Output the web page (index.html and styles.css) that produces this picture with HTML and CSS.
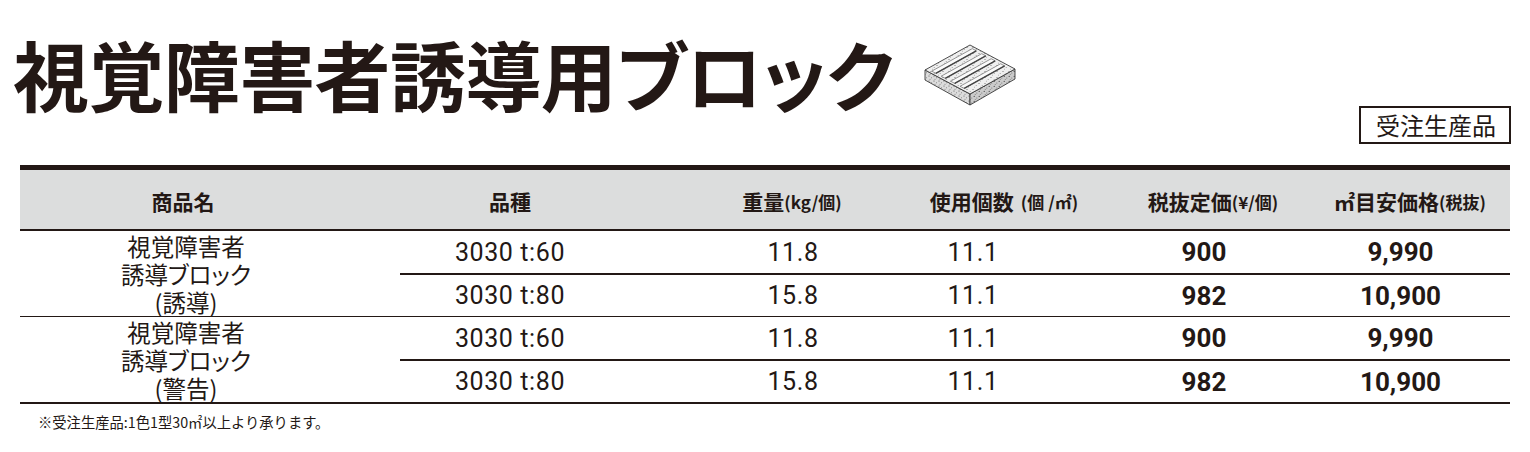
FILE: index.html
```html
<!DOCTYPE html>
<html lang="ja">
<head>
<meta charset="utf-8">
<title>視覚障害者誘導用ブロック</title>
<link rel="stylesheet" href="styles.css">
</head>
<body>
<div class="page">
  <div class="head">
    <div class="title-row">
      <h1 class="title">視覚障害者誘導用ブロック</h1>
      <svg class="tile-icon" width="100" height="68" viewBox="0 0 100 68" aria-hidden="true">
        <defs>
          <pattern id="dotsT" width="6" height="6" patternUnits="userSpaceOnUse">
            <rect width="6" height="6" fill="#efefef"/>
            <circle cx="1" cy="1.5" r=".55" fill="#6a6a6a"/>
            <circle cx="4.2" cy="3.4" r=".5" fill="#8a8a8a"/>
            <circle cx="2.4" cy="5.1" r=".45" fill="#5a5a5a"/>
          </pattern>
          <pattern id="dotsL" width="5" height="5" patternUnits="userSpaceOnUse">
            <rect width="5" height="5" fill="#dcdcdc"/>
            <circle cx="1" cy="1" r=".55" fill="#555"/>
            <circle cx="3.5" cy="2.8" r=".5" fill="#777"/>
            <circle cx="2" cy="4.3" r=".45" fill="#444"/>
          </pattern>
          <pattern id="dotsR" width="5" height="5" patternUnits="userSpaceOnUse">
            <rect width="5" height="5" fill="#cbcbcb"/>
            <circle cx="1.2" cy="1.4" r=".55" fill="#444"/>
            <circle cx="3.8" cy="3" r=".5" fill="#666"/>
            <circle cx="2.2" cy="4.4" r=".45" fill="#333"/>
          </pattern>
        </defs>
        <polygon points="7,30 52,54 52,65 7,40" fill="url(#dotsL)" stroke="#3a3a3a" stroke-width=".9"/>
        <polygon points="52,54 97,29 97,39 52,65" fill="url(#dotsR)" stroke="#3a3a3a" stroke-width=".9"/>
        <polygon points="7,30 52,5 97,29 52,54" fill="url(#dotsT)" stroke="#3a3a3a" stroke-width=".9"/>
        <g transform="matrix(.45,-.25,.45,.24,7,30)">
          <rect x="5" y="10" width="90" height="9" fill="#fafafa" stroke="#6a6a6a" stroke-width=".7" vector-effect="non-scaling-stroke"/>
          <line x1="5" y1="19" x2="95" y2="19" stroke="#444" stroke-width="1.4" vector-effect="non-scaling-stroke"/>
          <rect x="5" y="31" width="90" height="9" fill="#fafafa" stroke="#6a6a6a" stroke-width=".7" vector-effect="non-scaling-stroke"/>
          <line x1="5" y1="40" x2="95" y2="40" stroke="#444" stroke-width="1.4" vector-effect="non-scaling-stroke"/>
          <rect x="5" y="52" width="90" height="9" fill="#fafafa" stroke="#6a6a6a" stroke-width=".7" vector-effect="non-scaling-stroke"/>
          <line x1="5" y1="61" x2="95" y2="61" stroke="#444" stroke-width="1.4" vector-effect="non-scaling-stroke"/>
          <rect x="5" y="73" width="90" height="9" fill="#fafafa" stroke="#6a6a6a" stroke-width=".7" vector-effect="non-scaling-stroke"/>
          <line x1="5" y1="82" x2="95" y2="82" stroke="#444" stroke-width="1.4" vector-effect="non-scaling-stroke"/>
        </g>
      </svg>
    </div>
    <div class="order-badge">受注生産品</div>
  </div>

  <div class="spec-table">
    <div class="thead">
      <div class="th c1">商品名</div>
      <div class="th c2">品種</div>
      <div class="th c3">重量<span class="unit">(kg/個)</span></div>
      <div class="th c4">使用個数<span class="unit gap">(個 /㎡)</span></div>
      <div class="th c5">税抜定価<span class="unit">(¥/個)</span></div>
      <div class="th c6">㎡目安価格<span class="unit">(税抜)</span></div>
    </div>

    <div class="group">
      <div class="name"><span class="line">視覚障害者</span><span class="line">誘導ブロック</span><span class="line">(誘導)</span></div>
      <div class="td v2 first">3030 t:60</div>
      <div class="td v3 first">11.8</div>
      <div class="td v4 first">11.1</div>
      <div class="td v5 first strong">900</div>
      <div class="td v6 first strong">9,990</div>
      <div class="td v2">3030 t:80</div>
      <div class="td v3">15.8</div>
      <div class="td v4">11.1</div>
      <div class="td v5 strong">982</div>
      <div class="td v6 strong">10,900</div>
    </div>

    <div class="group last">
      <div class="name"><span class="line">視覚障害者</span><span class="line">誘導ブロック</span><span class="line">(警告)</span></div>
      <div class="td v2 first">3030 t:60</div>
      <div class="td v3 first">11.8</div>
      <div class="td v4 first">11.1</div>
      <div class="td v5 first strong">900</div>
      <div class="td v6 first strong">9,990</div>
      <div class="td v2">3030 t:80</div>
      <div class="td v3">15.8</div>
      <div class="td v4">11.1</div>
      <div class="td v5 strong">982</div>
      <div class="td v6 strong">10,900</div>
    </div>
  </div>

  <p class="note">※受注生産品:1色1型30㎡以上より承ります。</p>
</div>
</body>
</html>
```

FILE: styles.css
```css
* { box-sizing: border-box; }

html, body {
  margin: 0;
  padding: 0;
  background: #ffffff;
}

body {
  width: 1530px;
  height: 452px;
  overflow: hidden;
  color: #231815;
  font-family: "Noto Sans CJK JP", "Noto Sans", sans-serif;
}

.head {
  display: flex;
  justify-content: space-between;
  align-items: flex-start;
  height: 165px;
  padding: 0 19px 0 13px;
}

.title-row {
  display: flex;
  align-items: center;
  margin-top: 35px;
}

.title {
  margin: 0;
  font-size: 76px;
  line-height: 76px;
  font-weight: 700;
  font-feature-settings: "palt";
  letter-spacing: -0.6px;
  white-space: nowrap;
}

.tile-icon {
  display: block;
  margin-left: 24px;
  margin-top: 2px;
}

.order-badge {
  margin-top: 106px;
  height: 38px;
  padding: 0 13px 0 15px;
  border: 2px solid #231815;
  font-size: 24px;
  line-height: 34px;
  white-space: nowrap;
}

.spec-table {
  margin: 0 20px;
}

.thead,
.group {
  display: grid;
  grid-template-columns: 380px 251px 238px 206px 212px 203px;
}

.thead {
  height: 66px;
  border-top: 5px solid #231815;
  border-bottom: 2px solid #231815;
  background: #dcdddd;
}

.th {
  display: flex;
  align-items: center;
  justify-content: center;
  padding-top: 3px;
  font-size: 21px;
  font-weight: 700;
  white-space: nowrap;
}

.th .unit {
  font-size: 17px;
}

.th .unit.gap {
  margin-left: 7px;
}

.th.c1 { padding-right: 54px; }
.th.c2 { padding-right: 31px; }
.th.c3 { padding-left: 44px; }
.th.c4 { padding-left: 24px; }
.th.c5 { padding-left: 24px; }
.th.c6 { padding-left: 3px; }

.group {
  grid-template-rows: 44px 41px;
  border-bottom: 1.5px solid #231815;
}

.group.last {
  border-bottom-width: 2px;
}

.name {
  grid-row: 1 / span 2;
  grid-column: 1;
  display: flex;
  flex-direction: column;
  align-items: center;
  justify-content: center;
  padding-right: 48px;
  text-align: center;
  font-size: 23.5px;
  font-feature-settings: "palt";
}

.name .line {
  display: block;
  height: 28px;
  line-height: 28px;
}

.td {
  display: flex;
  align-items: center;
  justify-content: center;
  font-family: Roboto, "Liberation Sans", sans-serif;
  font-size: 25px;
  letter-spacing: 0.6px;
  white-space: nowrap;
}

.td.first {
  border-bottom: 2px solid #231815;
}

.td.strong {
  font-weight: 700;
  font-size: 26px;
  letter-spacing: 0;
}

.v2 { grid-column: 2; padding-right: 31px; }
.v3 { grid-column: 3; padding-left: 46px; }
.v4 { grid-column: 4; padding-right: 38px; }
.v5 { grid-column: 5; padding-left: 6px; }
.v6 { grid-column: 6; padding-right: 16px; }

.note {
  margin: 8px 0 0 38px;
  font-size: 14.3px;
  line-height: 20px;
}
```
